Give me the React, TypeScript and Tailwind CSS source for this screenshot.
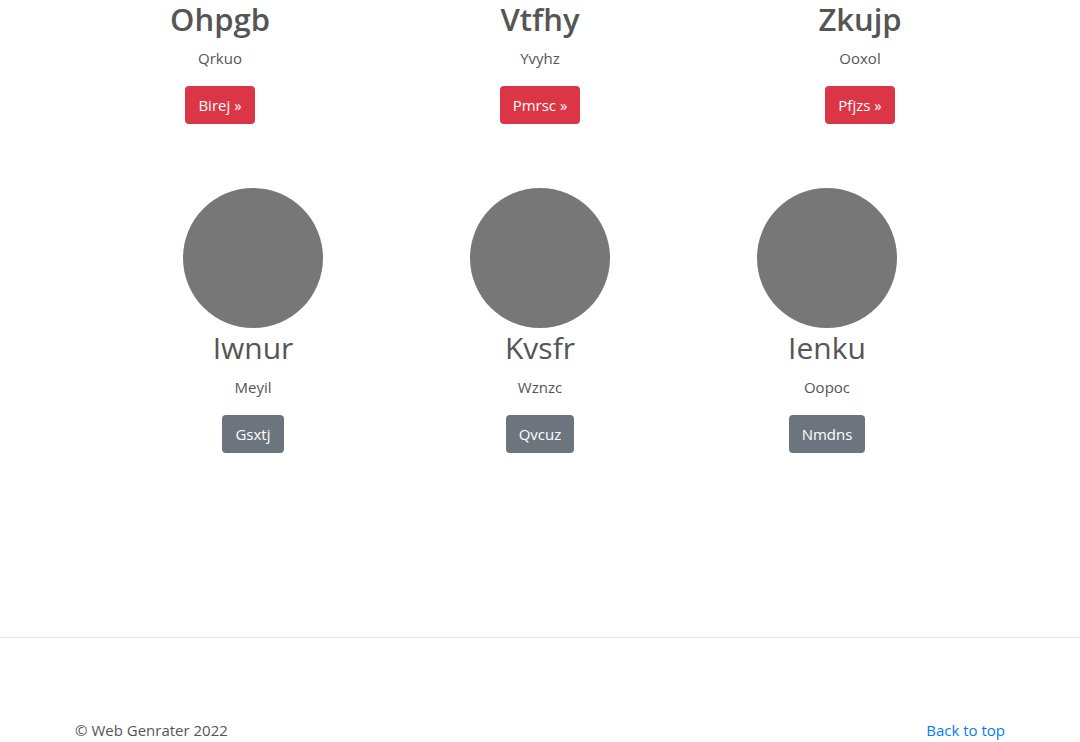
import React from 'react';

const featured = [
  { title: 'Ohpgb', text: 'Qrkuo', cta: 'Birej »' },
  { title: 'Vtfhy', text: 'Yvyhz', cta: 'Pmrsc »' },
  { title: 'Zkujp', text: 'Ooxol', cta: 'Pfjzs »' },
];

const people = [
  { name: 'Iwnur', text: 'Meyil', cta: 'Gsxtj' },
  { name: 'Kvsfr', text: 'Wznzc', cta: 'Qvcuz' },
  { name: 'Ienku', text: 'Oopoc', cta: 'Nmdns' },
];

export default function App() {
  return (
    <div
      className="min-h-screen bg-white text-[#555555]"
      style={{ fontFamily: '"Open Sans", "Noto Sans", sans-serif' }}
    >
      {/* Featured row */}
      <div className="mx-auto grid w-[960px] grid-cols-3 text-center">
        {featured.map((item) => (
          <div key={item.title} className="flex flex-col items-center">
            <h2 className="mb-2 text-[31px] font-semibold leading-[38px]">{item.title}</h2>
            <p className="mb-4 text-[15px] leading-6">{item.text}</p>
            <button className="h-[38px] rounded bg-[#dc3545] px-[13px] text-[15px] text-white">
              {item.cta}
            </button>
          </div>
        ))}
      </div>

      {/* People row */}
      <div className="mx-auto mt-16 grid w-[861px] grid-cols-3 text-center">
        {people.map((p) => (
          <div key={p.name} className="flex flex-col items-center">
            <div className="h-[140px] w-[140px] rounded-full bg-[#777777]" />
            <h2 className="mt-[1px] mb-2 text-[30px] font-normal leading-[38px]">{p.name}</h2>
            <p className="mb-4 text-[15px] leading-6">{p.text}</p>
            <button className="h-[38px] rounded bg-[#6c757d] px-[13px] text-[15px] text-white">
              {p.cta}
            </button>
          </div>
        ))}
      </div>

      <hr className="mt-[184px] border-t border-[#e5e5e5]" />

      <footer className="mx-auto flex w-[960px] items-center justify-between px-[15px] pt-[80px] text-[15px] leading-6">
        <p>© Web Genrater 2022</p>
        <a href="#" className="text-[#007bff]">
          Back to top
        </a>
      </footer>
    </div>
  );
}
